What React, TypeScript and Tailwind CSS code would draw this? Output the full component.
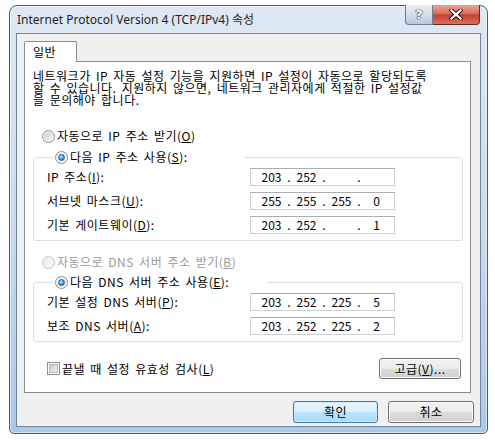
import React from 'react';

function Radio({ checked = false, disabled = false }: { checked?: boolean; disabled?: boolean }) {
  return (
    <span
      className={
        disabled
          ? 'flex h-[13px] w-[13px] shrink-0 items-center justify-center rounded-full border border-[#c5c5c5] bg-[#f4f4f4]'
          : 'flex h-[13px] w-[13px] shrink-0 items-center justify-center rounded-full border border-[#8e8f8f] bg-[#f4f4f4]'
      }
    >
      {checked ? (
        <span className="h-[7px] w-[7px] rounded-full border border-[#1f5d99] bg-[radial-gradient(circle_at_40%_35%,#c4ecff,#3e9be6_55%,#1a5ea8)]" />
      ) : (
        <span
          className={
            disabled
              ? 'h-[9px] w-[9px] rounded-full bg-linear-to-br from-[#e9e9e9] to-[#fbfbfb]'
              : 'h-[9px] w-[9px] rounded-full bg-linear-to-br from-[#cfcfcf] to-[#f7f7f7]'
          }
        />
      )}
    </span>
  );
}

function IpBox({ parts }: { parts: string[] }) {
  return (
    <div className="flex h-[18px] w-[145px] items-center border border-[#ccd0d7] border-t-[#abadb3] bg-white pl-[5px] leading-none tracking-normal">
      <span className="w-[31px] text-center">{parts[0]}</span>
      <span className="w-[4px] text-center">.</span>
      <span className="w-[31px] text-center">{parts[1]}</span>
      <span className="w-[4px] text-center">.</span>
      <span className="w-[31px] text-center">{parts[2]}</span>
      <span className="w-[4px] text-center">.</span>
      <span className="w-[31px] text-center">{parts[3]}</span>
    </div>
  );
}

function Row({ label, keyChar, parts }: { label: string; keyChar: string; parts: string[] }) {
  return (
    <div className="grid h-[18px] grid-cols-[203px_145px] items-center">
      <span className="whitespace-nowrap leading-none">
        {label}(<u>{keyChar}</u>):
      </span>
      <IpBox parts={parts} />
    </div>
  );
}

export default function App() {
  return (
    <div className="h-[440px] w-[495px] bg-white pl-[9px] pt-[5px] font-['Noto_Sans_CJK_KR','Noto_Sans',sans-serif] text-[12px] text-black">
      <div className="flex h-[429px] w-[479px] flex-col rounded-b-[5px] rounded-t-[8px] border border-[#4b5b6f] bg-linear-to-b from-[#dfe9f5] via-[#cadbee] to-[#aac8ea] px-[6px] pb-[6px] shadow-[inset_0_0_0_1px_rgba(255,255,255,0.55)]">
        {/* Title bar */}
        <div className="flex h-[27px] items-start justify-between">
          <div className="whitespace-nowrap pl-[1px] pt-[6px] font-['Noto_Sans','Noto_Sans_CJK_KR',sans-serif] text-[12px] leading-[16px] text-[#1e1e1e]">
            Internet Protocol Version 4 (TCP/IPv4) 속성
          </div>
          <div className="-mt-px mr-[1px] flex">
            <div className="flex h-[20px] w-[28px] items-center justify-center rounded-bl-[4px] border border-t-0 border-[#6c7d92] bg-linear-to-b from-[#e6edf5] via-[#d3deeb] to-[#b6c8dd] font-['DejaVu_Sans',sans-serif] text-[13px] font-bold leading-none text-white [text-shadow:0_0_1px_#222,0_0_1px_#222,0_0_1px_#222]">
              ?
            </div>
            <div className="flex h-[20px] w-[47px] items-center justify-center rounded-br-[4px] border border-l-0 border-t-0 border-[#6e2a24] bg-[linear-gradient(#e9a396,#d9705f_45%,#c6412f_52%,#d7705d)]">
              <svg width="14" height="11" viewBox="0 0 14 11">
                <path d="M2.5 1.5 L11.5 9.5 M11.5 1.5 L2.5 9.5" stroke="#3a1410" strokeWidth="4.2" strokeLinecap="square" />
                <path d="M2.5 1.5 L11.5 9.5 M11.5 1.5 L2.5 9.5" stroke="#ffffff" strokeWidth="2.2" strokeLinecap="square" />
              </svg>
            </div>
          </div>
        </div>

        {/* Client area */}
        <div className="flex flex-1 flex-col border border-[#71859d] bg-[#f0f0f0] pb-[3px] pl-[7px] pr-[6px] pt-[7px]">
          {/* Tabs */}
          <div className="flex">
            <div className="relative z-10 -mb-px flex h-[21px] w-[53px] items-center rounded-t-[2px] border border-b-0 border-[#898c95] bg-white pl-[8px] leading-none tracking-[0.5px]">
              일반
            </div>
          </div>

          {/* Tab panel */}
          <div className="h-[332px] w-[447px] border border-[#898c95] bg-white pl-[8px] pr-[9px] pt-[8px] tracking-[0.5px] [word-spacing:2px]">
            <div className="leading-[12px]">
              <div className="whitespace-nowrap">네트워크가 IP 자동 설정 기능을 지원하면 IP 설정이 자동으로 할당되도록</div>
              <div className="whitespace-nowrap">할 수 있습니다. 지원하지 않으면, 네트워크 관리자에게 적절한 IP 설정값</div>
              <div className="whitespace-nowrap">을 문의해야 합니다.</div>
            </div>

            <div className="mt-[22px] flex h-[16px] items-center gap-[2px] pl-[9px] leading-none">
              <Radio />
              <span>
                자동으로 IP 주소 받기(<u>O</u>)
              </span>
            </div>

            <fieldset className="mt-[6px] w-[430px] rounded-[3px] border border-[#d5dfe5] pb-[6px] pl-[13px] pt-[4px]">
              <legend className="ml-[6px] flex h-[14px] w-[191px] items-center gap-[2px] pl-[2px] leading-none">
                <Radio checked />
                <span>
                  다음 IP 주소 사용(<u>S</u>):
                </span>
              </legend>
              <div className="flex flex-col gap-[6px]">
                <Row label="IP 주소" keyChar="I" parts={['203', '252', '', '']} />
                <Row label="서브넷 마스크" keyChar="U" parts={['255', '255', '255', '0']} />
                <Row label="기본 게이트웨이" keyChar="D" parts={['203', '252', '', '1']} />
              </div>
            </fieldset>

            <div className="mt-[13px] flex h-[16px] items-center gap-[2px] pl-[9px] leading-none text-[#9a9a9a]">
              <Radio disabled />
              <span>
                자동으로 DNS 서버 주소 받기(<u>B</u>)
              </span>
            </div>

            <fieldset className="mt-[5px] w-[430px] rounded-[3px] border border-[#d5dfe5] pb-[6px] pl-[13px] pt-[4px]">
              <legend className="ml-[6px] flex h-[14px] w-[214px] items-center gap-[2px] pl-[2px] leading-none">
                <Radio checked />
                <span>
                  다음 DNS 서버 주소 사용(<u>E</u>):
                </span>
              </legend>
              <div className="flex flex-col gap-[6px]">
                <Row label="기본 설정 DNS 서버" keyChar="P" parts={['203', '252', '225', '5']} />
                <Row label="보조 DNS 서버" keyChar="A" parts={['203', '252', '225', '2']} />
              </div>
            </fieldset>

            <div className="mt-[16px] flex h-[21px] items-center justify-between">
              <div className="flex items-center gap-[2px] pl-[14px] leading-none">
                <span className="flex h-[13px] w-[13px] items-center justify-center border border-[#8e8f8f] bg-white">
                  <span className="h-[9px] w-[9px] border border-[#b3b6bb] bg-linear-to-br from-[#cbcbcb] to-[#f4f4f4]" />
                </span>
                <span>
                  끝낼 때 설정 유효성 검사(<u>L</u>)
                </span>
              </div>
              <button className="flex h-[21px] w-[82px] items-center justify-center rounded-[3px] border border-[#707070] bg-[linear-gradient(#f2f2f2,#ebebeb_50%,#dddddd_50%,#cfcfcf)] leading-none shadow-[inset_0_0_0_1px_#fcfcfc]">
                고급(<u>V</u>)...
              </button>
            </div>
          </div>

          {/* Dialog buttons */}
          <div className="mt-[8px] flex justify-end gap-[10px] tracking-[0.5px]">
            <button className="flex h-[22px] w-[85px] items-center justify-center rounded-[3px] border border-[#3c7fb1] bg-[linear-gradient(#eaf6fd,#d9f0fc_50%,#bee6fd_50%,#a7d9f5)] leading-none shadow-[inset_0_0_0_1px_#c8e8fb]">
              확인
            </button>
            <button className="flex h-[22px] w-[86px] items-center justify-center rounded-[3px] border border-[#707070] bg-[linear-gradient(#f2f2f2,#ebebeb_50%,#dddddd_50%,#cfcfcf)] leading-none shadow-[inset_0_0_0_1px_#fcfcfc]">
              취소
            </button>
          </div>
        </div>
      </div>
    </div>
  );
}
